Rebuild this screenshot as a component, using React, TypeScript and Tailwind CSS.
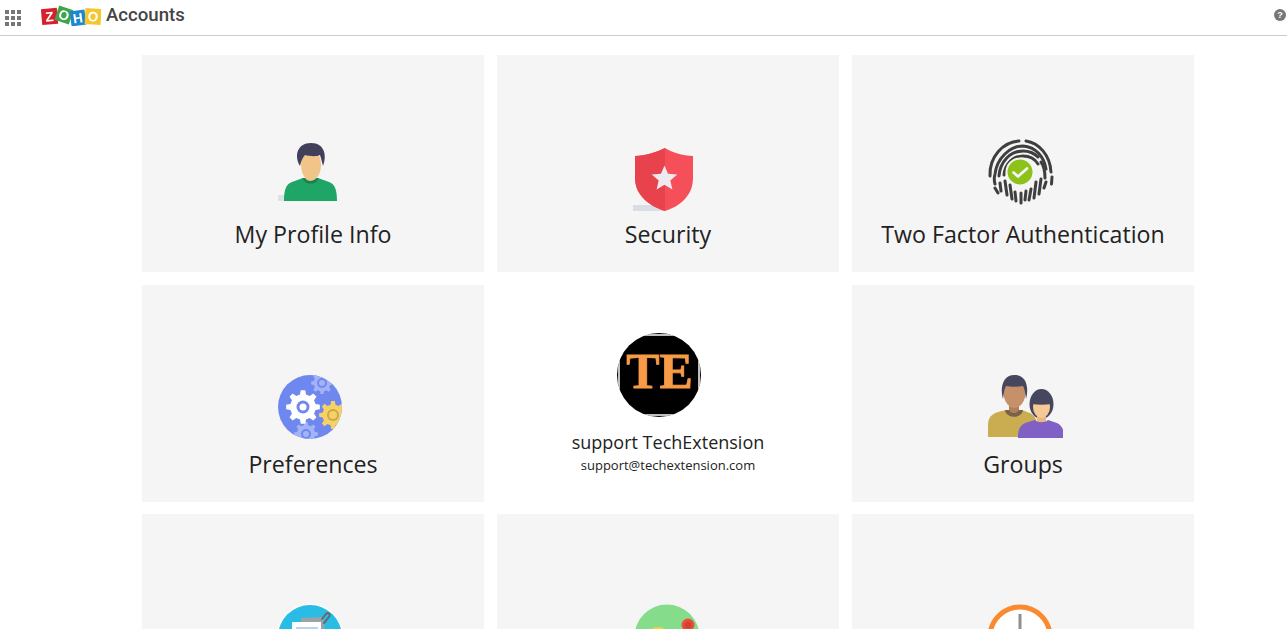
import React from "react";

function gearPath(cx: number, cy: number, r: number, teeth = 8) {
  const pts: string[] = [];
  const inner = r * 0.76;
  const step = (Math.PI * 2) / teeth;
  for (let i = 0; i < teeth; i++) {
    const a = i * step - Math.PI / 2;
    const list: [number, number][] = [
      [inner, a - step * 0.3],
      [r, a - step * 0.17],
      [r, a + step * 0.17],
      [inner, a + step * 0.3],
    ];
    for (const [rad, ang] of list) {
      pts.push(`${(cx + rad * Math.cos(ang)).toFixed(2)} ${(cy + rad * Math.sin(ang)).toFixed(2)}`);
    }
  }
  return `M${pts.join("L")}Z`;
}

const iconClass = "block w-[80px] h-[80px] shrink-0 blur-[0.7px]";

function PersonIcon() {
  return (
    <svg viewBox="0 0 80 80" className={iconClass}>
      <rect x="5" y="60" width="10" height="6" fill="#dfe1e9" />
      <path d="M11 66c0-11 2-17 8-19l11-4h15l11 4c6 2 8 8 8 19z" fill="#1fa565" />
      <path d="M29 43h17l-3 4c-3 2-8 2-11 0z" fill="#178250" />
      <path d="M32 34h10v9c-2 4-8 4-10 0z" fill="#dfa76f" />
      <ellipse cx="38" cy="30" rx="10" ry="15.500" fill="#f1c588" />
      <path d="M27 31c-6-10-3-23 11-23 14 0 16 13 12 23-1-4-2-8-3-11-4 2-11 1-15 0-3 3-4 7-5 11z" fill="#40405a" />
    </svg>
  );
}

function ShieldIcon() {
  return (
    <svg viewBox="0 0 80 80" className={iconClass}>
      <rect x="5" y="70" width="30" height="6" fill="#d9dde6" />
      <path d="M37 13c6 4 18 8 28 8v22c0 17-12 28-28 33C21 71 7 60 7 43V21c10 0 22-4 30-8z" fill="#f5505a" />
      <path d="M37 13C29 17 17 21 7 21v22c0 17 14 28 30 33z" fill="#e8434c" />
      <path d="M36.500 30.500l3.500 8.200 9.300.8-7 6 2.100 9-7.900-4.800-7.900 4.800 2.100-9-7-6 9.300-.8z" fill="#eceaf0" />
    </svg>
  );
}

function FingerprintIcon() {
  const c = "#3f3f3f";
  return (
    <svg viewBox="0 0 80 80" className={iconClass} fill="none" stroke={c} strokeWidth="3" strokeLinecap="round">
      <path d="M7 41C6 22 20 7 36 6" />
      <path d="M43 6c13 2 24 14 25 31" />
      <path d="M69 42l-.5 7" />
      <path d="M12 49c-1-3-1-6 0-10C14 23 27 11 40 11c13 1 21 11 23 23" />
      <path d="M16 41C17 27 27 16 40 16c6 0 11 2 15 6" />
      <path d="M58 27c3 4 4 9 4 16" />
      <path d="M21 40c1-11 9-19 19-19 7 0 12 3 15 8" />
      <path d="M17 48l1 8M12 53l3 5M22 46l2 14M27 50l2 14M32 57l1 9M38 58l0 10M43 56l-1 9M48 54l-2 11M53 47l-2 16M58 44l-2 15M63 47l-2 6" />
      <circle cx="37" cy="37" r="13.500" fill="#8cc21a" stroke="#f5f5f5" strokeWidth="2" />
      <path d="M30.500 37.500l4.500 4 9-8" stroke="#f5f5f5" strokeWidth="2.800" />
    </svg>
  );
}

function GearIcon() {
  return (
    <svg viewBox="0 0 80 80" className={iconClass}>
      <defs>
        <clipPath id="gear-clip">
          <circle cx="37" cy="42" r="32" />
        </clipPath>
      </defs>
      <circle cx="37" cy="42" r="32" fill="#6f88ef" />
      <g clipPath="url(#gear-clip)">
        <path d={gearPath(49, 18, 11)} fill="#a4b3f5" />
        <circle cx="49" cy="18" r="5" fill="#6f88ef" />
        <circle cx="49" cy="18" r="3" fill="#a4b3f5" />
        <path d={gearPath(33, 69, 12)} fill="#a4b3f5" />
        <circle cx="33" cy="69" r="5" fill="#6f88ef" />
        <circle cx="33" cy="69" r="3" fill="#a4b3f5" />
        <path d={gearPath(60, 50, 14)} fill="#f5d263" />
        <circle cx="60" cy="50" r="6" fill="#c9a94e" />
        <circle cx="60" cy="50" r="4" fill="#f5d263" />
      </g>
      <path d={gearPath(30, 42, 17)} fill="#ffffff" />
      <circle cx="30" cy="42" r="6.500" fill="#6f88ef" />
      <circle cx="30" cy="42" r="3.500" fill="#ffffff" />
    </svg>
  );
}

function GroupsIcon() {
  return (
    <svg viewBox="0 0 80 80" className={iconClass}>
      <path d="M5 72V60c0-8 4-11 10-13l8-2h16l8 3c4 2 7 6 7 12v12z" fill="#c9ad50" />
      <path d="M22 45h18c-1 9-17 9-18 0z" fill="#7b604b" />
      <path d="M26 36h10v9c-2 4-8 4-10 0z" fill="#b08058" />
      <ellipse cx="31.500" cy="27" rx="11" ry="16" fill="#c6916a" />
      <path d="M20 34c-3-10-1-24 11.500-24 12.500 0 14.500 13 11.500 24-1-6-1-10-3-13-5 1-12 1-17 0-2 3-2 7-3 13z" fill="#47465f" />
      <ellipse cx="58.500" cy="39" rx="12" ry="15" fill="#47465f" />
      <path d="M54 48h9v9c-1 3-8 3-9 0z" fill="#eab682" />
      <ellipse cx="58.500" cy="42" rx="8.500" ry="11" fill="#f4c995" />
      <path d="M49 39c0-6 4-10 9.500-10 5.500 0 9.500 4 9.500 10-6 1-13 1-19 0z" fill="#47465f" />
      <path d="M35 73c0-7 1-12 7-15l10-3c3 3 10 3 13 0l9 3c6 3 7 8 7 15z" fill="#8160c6" />
    </svg>
  );
}

function ReportIcon() {
  return (
    <svg viewBox="0 0 80 80" className={iconClass}>
      <circle cx="37" cy="43" r="33.500" fill="#ffffff" />
      <circle cx="37" cy="43" r="32" fill="#29bde6" />
      <path d="M28 24l22-1 2 14H28z" fill="#9aa3a8" />
      <rect x="19" y="28" width="29" height="12" fill="#ffffff" />
      <rect x="23" y="33" width="22" height="8" fill="#b9d4ee" />
      <path d="M49 25l4-5c2-2 5 0 3 3l-5 6" fill="none" stroke="#666b70" strokeWidth="2" strokeLinecap="round" />
    </svg>
  );
}

function MapIcon() {
  return (
    <svg viewBox="0 0 80 80" className={iconClass}>
      <circle cx="39" cy="43" r="32.500" fill="#85dd8c" />
      <circle cx="30" cy="44" r="11" fill="#f6cf3f" />
      <circle cx="60" cy="31" r="6.500" fill="#ea4f3d" />
      <circle cx="60" cy="31" r="3.500" fill="#d2432f" />
    </svg>
  );
}

function ClockIcon() {
  return (
    <svg viewBox="0 0 80 80" className={iconClass}>
      <circle cx="37" cy="43" r="30" fill="#ffffff" stroke="#fb8a2e" strokeWidth="5" />
      <rect x="35.500" y="20" width="3" height="20" fill="#8f8f8f" />
    </svg>
  );
}

function ZohoLogo() {
  const letter = "font-['Liberation_Sans',sans-serif] font-bold";
  return (
    <svg viewBox="0 0 60 22" className="block w-[60px] h-[22px] shrink-0 blur-[0.3px]">
      <g transform="rotate(-5 8 12)">
        <rect x="0.500" y="4.500" width="16" height="16" fill="#d7202e" />
        <text x="8.500" y="17.500" textAnchor="middle" fontSize="13.500" fill="#ffffff" className={letter}>Z</text>
      </g>
      <g transform="rotate(18 23 11)">
        <rect x="15.500" y="3.500" width="15" height="15" fill="#3fa54a" />
        <text x="23" y="15.800" textAnchor="middle" fontSize="13.500" fill="#ffffff" className={letter}>O</text>
      </g>
      <g transform="rotate(-8 37 14)">
        <rect x="29.500" y="6.500" width="15" height="15" fill="#1f88cd" />
        <text x="37" y="18.800" textAnchor="middle" fontSize="13.500" fill="#ffffff" className={letter}>H</text>
      </g>
      <g transform="rotate(3 52 13)">
        <rect x="44" y="4.500" width="16" height="16" fill="#f5c72f" />
        <text x="52" y="17.300" textAnchor="middle" fontSize="13.500" fill="#ffffff" className={letter}>O</text>
      </g>
    </svg>
  );
}

function Card({ icon, title }: { icon: React.ReactNode; title?: string }) {
  return (
    <div className="flex h-[217px] flex-col items-center overflow-hidden bg-[#f5f5f5] pt-[80px]">
      {icon}
      {title ? <div className="mt-px text-[23.2px] leading-[36px] text-[#222222]">{title}</div> : null}
    </div>
  );
}

function ProfileCard() {
  return (
    <div className="flex h-[217px] flex-col items-center bg-white pt-[48px]">
      <svg viewBox="0 0 84 84" className="mr-[18px] block h-[84px] w-[84px] shrink-0">
        <defs>
          <clipPath id="te-clip">
            <circle cx="42" cy="42" r="42" />
          </clipPath>
        </defs>
        <circle cx="42" cy="42" r="42" fill="#000000" />
        <rect x="2" y="2" width="80" height="80" fill="none" stroke="#ffffff" strokeWidth="1.500" clipPath="url(#te-clip)" />
        <text
          x="42.500"
          y="55"
          textAnchor="middle"
          fontSize="50"
          fontWeight="700"
          fill="#f79b47"
          stroke="#f79b47"
          strokeWidth="0.800"
          className="font-['Liberation_Serif',serif]"
        >
          TE
        </text>
      </svg>
      <div className="mt-3 text-[18px] leading-[26px] text-[#222222]">support TechExtension</div>
      <div className="mt-px text-[13px] leading-[18px] text-[#222222]">support@techextension.com</div>
    </div>
  );
}

export default function App() {
  return (
    <div className="h-[629px] overflow-hidden bg-white font-['Open_Sans',sans-serif]">
      <header className="flex h-[36px] items-center border-b border-[#cccccc] pr-[1px]">
        <div className="ml-[5px] grid w-[16px] grid-cols-3 gap-[2px]">
          {Array.from({ length: 9 }).map((_, i) => (
            <span key={i} className="h-[4px] w-[4px] bg-[#777777]" />
          ))}
        </div>
        <div className="ml-[20px] mt-[-6px]">
          <ZohoLogo />
        </div>
        <div className="ml-[5px] mt-[-5px] font-['Roboto',sans-serif] text-[18.6px] font-medium leading-[24px] text-[#444444]">
          Accounts
        </div>
        <div className="ml-auto mr-[0px] mt-[-5px] flex h-[12px] w-[12px] items-center justify-center rounded-full bg-[#777777] font-['Liberation_Sans',sans-serif] text-[9px] font-bold leading-none text-white">
          ?
        </div>
      </header>
      <main className="ml-[142px] mt-[19px] grid w-[1052px] grid-cols-3 gap-x-[13px] gap-y-[12.5px]">
        <Card icon={<PersonIcon />} title="My Profile Info" />
        <Card icon={<ShieldIcon />} title="Security" />
        <Card icon={<FingerprintIcon />} title="Two Factor Authentication" />
        <Card icon={<GearIcon />} title="Preferences" />
        <ProfileCard />
        <Card icon={<GroupsIcon />} title="Groups" />
        <Card icon={<ReportIcon />} />
        <Card icon={<MapIcon />} />
        <Card icon={<ClockIcon />} />
      </main>
    </div>
  );
}
